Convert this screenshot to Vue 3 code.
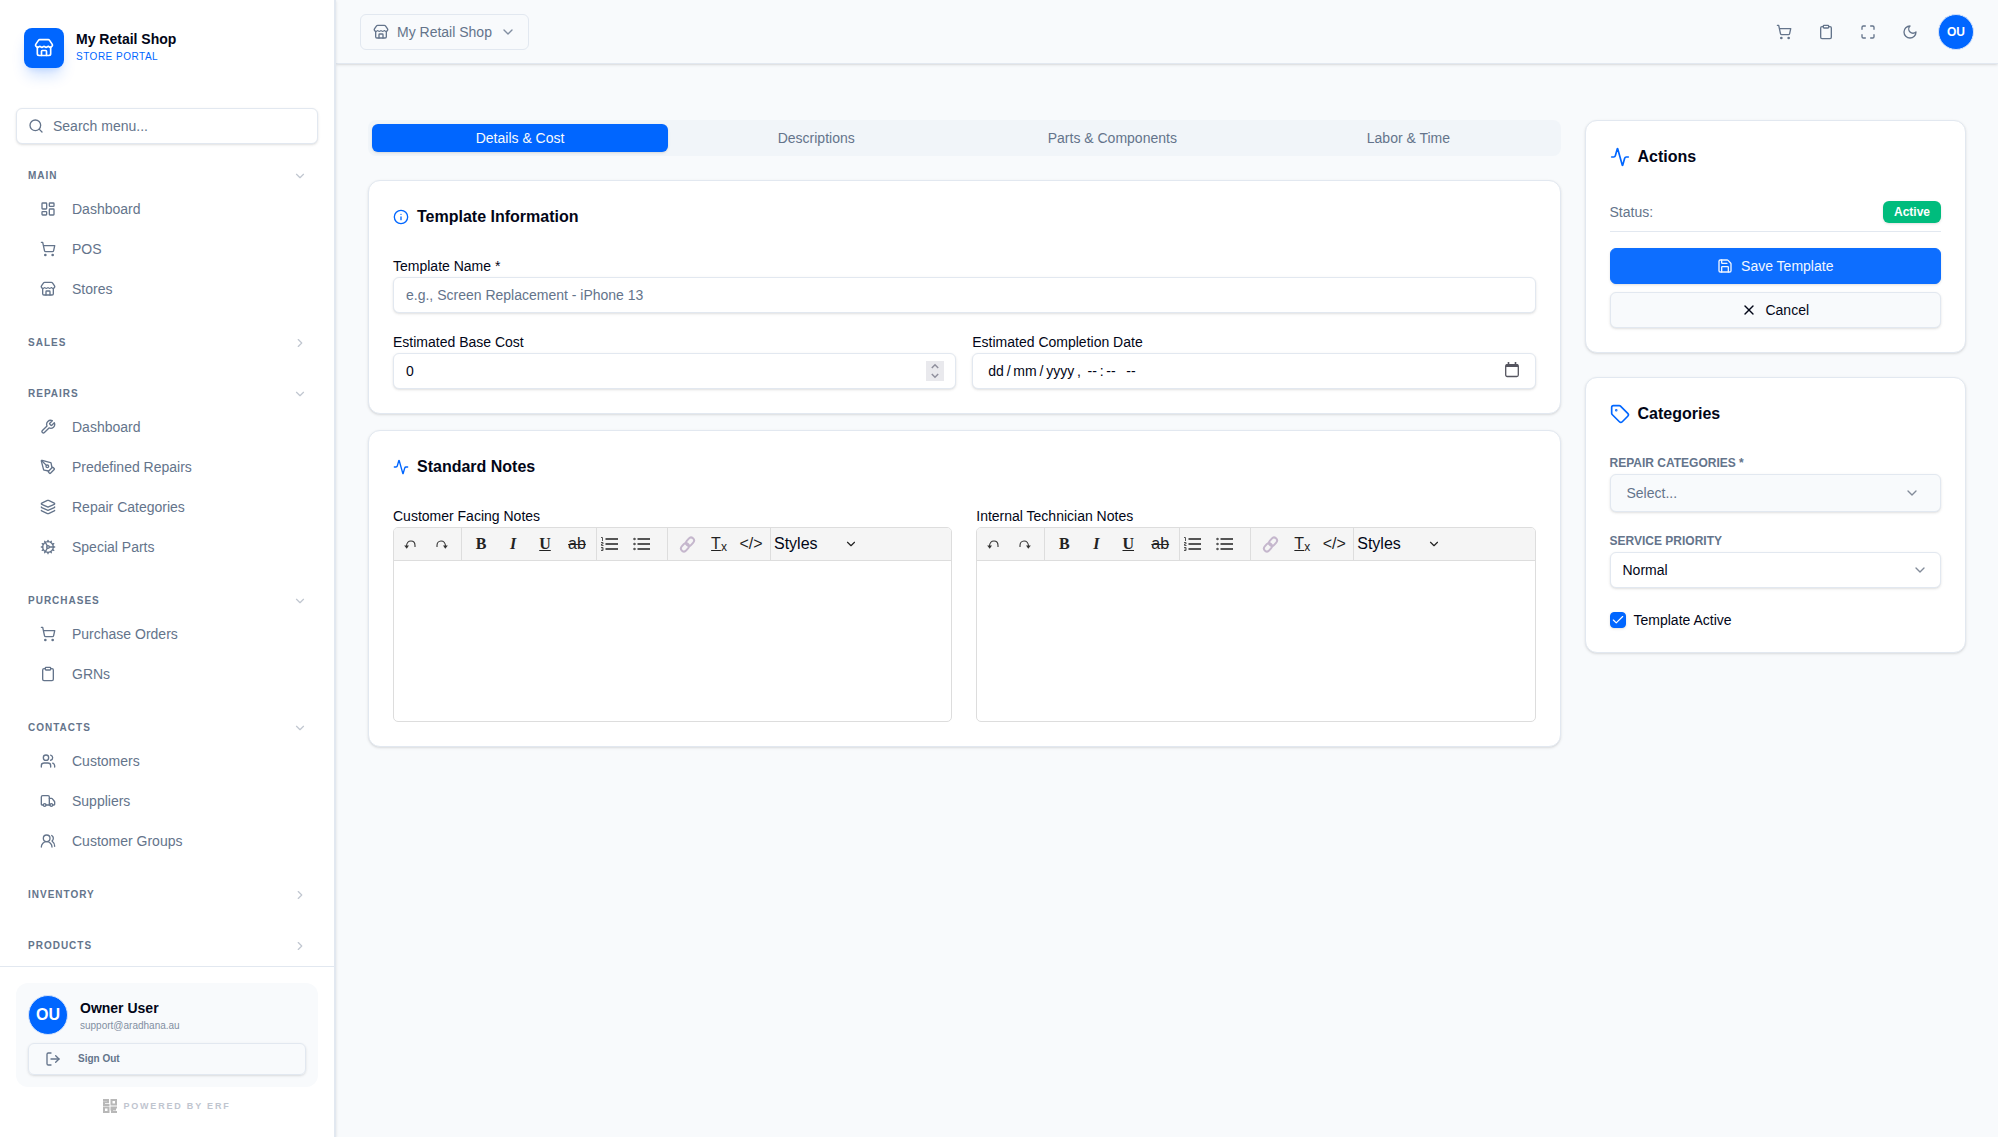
<script setup>
import { ref, h } from 'vue'

const icons = {
  store: '<path d="M15 21v-5a1 1 0 0 0-1-1h-4a1 1 0 0 0-1 1v5"/><path d="M17.774 10.31a1.12 1.12 0 0 0-1.549 0 2.5 2.5 0 0 1-3.451 0 1.12 1.12 0 0 0-1.548 0 2.5 2.5 0 0 1-3.452 0 1.12 1.12 0 0 0-1.549 0 2.5 2.5 0 0 1-3.77-3.248l2.889-4.184A2 2 0 0 1 7 2h10a2 2 0 0 1 1.653.873l2.895 4.192a2.5 2.5 0 0 1-3.774 3.244"/><path d="M4 10.95V19a2 2 0 0 0 2 2h12a2 2 0 0 0 2-2v-8.05"/>',
  dashboard: '<rect x="3" y="3" width="7" height="9" rx="1"/><rect x="14" y="3" width="7" height="5" rx="1"/><rect x="14" y="12" width="7" height="9" rx="1"/><rect x="3" y="16" width="7" height="5" rx="1"/>',
  cart: '<circle cx="8" cy="21" r="1"/><circle cx="19" cy="21" r="1"/><path d="M2.05 2.05h2l2.66 12.42a2 2 0 0 0 2 1.58h9.78a2 2 0 0 0 1.95-1.57l1.65-7.43H5.12"/>',
  wrench: '<path d="M14.7 6.3a1 1 0 0 0 0 1.4l1.6 1.6a1 1 0 0 0 1.4 0l3.77-3.77a6 6 0 0 1-7.94 7.94l-6.91 6.91a2.12 2.12 0 0 1-3-3l6.91-6.91a6 6 0 0 1 7.94-7.94l-3.76 3.76z"/>',
  pen: '<path d="M15.707 21.293a1 1 0 0 1-1.414 0l-1.586-1.586a1 1 0 0 1 0-1.414l5.586-5.586a1 1 0 0 1 1.414 0l1.586 1.586a1 1 0 0 1 0 1.414z"/><path d="m18 13-1.375-6.874a1 1 0 0 0-.746-.776L3.235 2.028a1 1 0 0 0-1.207 1.207L5.35 15.879a1 1 0 0 0 .776.746L13 18"/><path d="m2.3 2.3 7.286 7.286"/><circle cx="11" cy="11" r="2"/>',
  layers: '<path d="M12.83 2.18a2 2 0 0 0-1.66 0L2.6 6.08a1 1 0 0 0 0 1.83l8.58 3.91a2 2 0 0 0 1.66 0l8.58-3.9a1 1 0 0 0 0-1.83z"/><path d="M2 12a1 1 0 0 0 .58.91l8.6 3.91a2 2 0 0 0 1.65 0l8.58-3.9A1 1 0 0 0 22 12"/><path d="M2 17a1 1 0 0 0 .58.91l8.6 3.91a2 2 0 0 0 1.65 0l8.58-3.9A1 1 0 0 0 22 17"/>',
  cog: '<circle cx="12" cy="12" r="8"/><circle cx="12" cy="12" r="2"/><path d="M12 2v2"/><path d="M12 22v-2"/><path d="m17 20.66-1-1.73"/><path d="M11 10.27 7 3.34"/><path d="m20.66 17-1.73-1"/><path d="m3.34 7 1.73 1"/><path d="M14 12h8"/><path d="M2 12h2"/><path d="m20.66 7-1.73 1"/><path d="m3.34 17 1.73-1"/><path d="m17 3.34-1 1.73"/><path d="m11 13.73-4 6.93"/>',
  clipboard: '<rect x="8" y="2" width="8" height="4" rx="1"/><path d="M16 4h2a2 2 0 0 1 2 2v14a2 2 0 0 1-2 2H6a2 2 0 0 1-2-2V6a2 2 0 0 1 2-2h2"/>',
  users: '<path d="M16 21v-2a4 4 0 0 0-4-4H6a4 4 0 0 0-4 4v2"/><circle cx="9" cy="7" r="4"/><path d="M22 21v-2a4 4 0 0 0-3-3.87"/><path d="M16 3.13a4 4 0 0 1 0 7.75"/>',
  truck: '<path d="M14 18V6a2 2 0 0 0-2-2H4a2 2 0 0 0-2 2v11a1 1 0 0 0 1 1h2"/><path d="M15 18H9"/><path d="M19 18h2a1 1 0 0 0 1-1v-3.65a1 1 0 0 0-.22-.624l-3.48-4.35A1 1 0 0 0 17.52 8H14"/><circle cx="17" cy="18" r="2"/><circle cx="7" cy="18" r="2"/>',
  groups: '<path d="M18 21a8 8 0 0 0-16 0"/><circle cx="10" cy="8" r="5"/><path d="M22 20c0-3.37-2-6.5-4-8a5 5 0 0 0-.45-8.3"/>',
  maximize: '<path d="M8 3H5a2 2 0 0 0-2 2v3"/><path d="M21 8V5a2 2 0 0 0-2-2h-3"/><path d="M3 16v3a2 2 0 0 0 2 2h3"/><path d="M16 21h3a2 2 0 0 0 2-2v-3"/>',
  moon: '<path d="M12 3a6 6 0 0 0 9 9 9 9 0 1 1-9-9Z"/>',
  info: '<circle cx="12" cy="12" r="10"/><path d="M12 16v-4"/><path d="M12 8h.01"/>',
  activity: '<path d="M22 12h-2.48a2 2 0 0 0-1.93 1.46l-2.35 8.36a.25.25 0 0 1-.48 0L9.24 2.18a.25.25 0 0 0-.48 0l-2.35 8.36A2 2 0 0 1 4.49 12H2"/>',
  tag: '<path d="M12.586 2.586A2 2 0 0 0 11.172 2H4a2 2 0 0 0-2 2v7.172a2 2 0 0 0 .586 1.414l8.704 8.704a2.426 2.426 0 0 0 3.42 0l6.58-6.58a2.426 2.426 0 0 0 0-3.42z"/><circle cx="7.5" cy="7.5" r=".5" fill="currentColor"/>',
  save: '<path d="M15.2 3a2 2 0 0 1 1.4.6l3.8 3.8a2 2 0 0 1 .6 1.4V19a2 2 0 0 1-2 2H5a2 2 0 0 1-2-2V5a2 2 0 0 1 2-2z"/><path d="M17 21v-7a1 1 0 0 0-1-1H8a1 1 0 0 0-1 1v7"/><path d="M7 3v4a1 1 0 0 0 1 1h7"/>',
  x: '<path d="M18 6 6 18"/><path d="m6 6 12 12"/>',
  logout: '<path d="m16 17 5-5-5-5"/><path d="M21 12H9"/><path d="M9 21H5a2 2 0 0 1-2-2V5a2 2 0 0 1 2-2h4"/>',
  search: '<circle cx="11" cy="11" r="8"/><path d="m21 21-4.3-4.3"/>',
  down: '<path d="m6 9 6 6 6-6"/>',
  right: '<path d="m9 18 6-6-6-6"/>',
  check: '<path d="M20 6 9 17l-5-5"/>'
}

const Icon = (props) =>
  h('svg', {
    width: props.size || 16,
    height: props.size || 16,
    viewBox: '0 0 24 24',
    fill: 'none',
    stroke: 'currentColor',
    'stroke-width': 2,
    'stroke-linecap': 'round',
    'stroke-linejoin': 'round',
    'aria-hidden': 'true',
    innerHTML: icons[props.name]
  })
Icon.props = ['name', 'size']

const sections = ref([
  { title: 'Main', open: true, items: [['dashboard', 'Dashboard'], ['cart', 'POS'], ['store', 'Stores']] },
  { title: 'Sales', open: false, items: [] },
  { title: 'Repairs', open: true, items: [['wrench', 'Dashboard'], ['pen', 'Predefined Repairs'], ['layers', 'Repair Categories'], ['cog', 'Special Parts']] },
  { title: 'Purchases', open: true, items: [['cart', 'Purchase Orders'], ['clipboard', 'GRNs']] },
  { title: 'Contacts', open: true, items: [['users', 'Customers'], ['truck', 'Suppliers'], ['groups', 'Customer Groups']] },
  { title: 'Inventory', open: false, items: [] },
  { title: 'Products', open: false, items: [] }
])
const tabs = ['Details & Cost', 'Descriptions', 'Parts & Components', 'Labor & Time']
const activeTab = ref(0)
const tools = [['cart', 'Cart'], ['clipboard', 'Clipboard'], ['maximize', 'Full screen'], ['moon', 'Dark mode']]
const editors = [['customer-notes', 'Customer Facing Notes'], ['internal-notes', 'Internal Technician Notes']]
const cost = ref(0)
const active = ref(true)

// Thin spaces keep the date segments apart
const date = ref('dd\u2009/\u2009mm\u2009/\u2009yyyy\u2009, \u2009--\u2009:\u2009-- \u00a0\u2009--')
</script>

<template>
  <div class="shell">
    <aside class="sidebar">
      <div class="brand">
        <span class="logo"><Icon name="store" :size="20" /></span>
        <div class="brand-text">
          <strong>My Retail Shop</strong>
          <span>STORE PORTAL</span>
        </div>
      </div>
      <div class="search">
        <Icon name="search" />
        <input type="search" placeholder="Search menu..." aria-label="Search menu" />
      </div>
      <nav class="nav">
        <section v-for="s in sections" :key="s.title">
          <button class="nav-head" type="button" @click="s.open = !s.open">
            <span>{{ s.title }}</span>
            <Icon :name="s.open ? 'down' : 'right'" :size="14" />
          </button>
          <ul v-if="s.open">
            <li v-for="[icon, label] in s.items" :key="label">
              <a href="#"><Icon :name="icon" />{{ label }}</a>
            </li>
          </ul>
        </section>
      </nav>
      <div class="foot">
        <div class="user">
          <div class="user-row">
            <span class="avatar large">OU</span>
            <div class="user-text">
              <strong>Owner User</strong>
              <span>support@aradhana.au</span>
            </div>
          </div>
          <button class="signout" type="button"><Icon name="logout" />Sign Out</button>
        </div>
        <div class="powered">
          <svg width="14" height="14" viewBox="0 0 14 14" fill="none" stroke="#b8b8b8" stroke-width="2" aria-hidden="true">
            <path d="M0 1h5v2.300H1V6h5.500M8.500 1H13v4.500H8.500zM1 8.500h4.500V13H1zM14 8.500H8.500v2H13M8 13h6M9 8v5" />
          </svg>
          <span>POWERED BY ERF</span>
        </div>
      </div>
    </aside>

    <div class="page">
      <header class="topbar">
        <button class="switcher" type="button">
          <Icon name="store" /><span>My Retail Shop</span><Icon class="chev" name="down" />
        </button>
        <div class="tools">
          <button v-for="[icon, label] in tools" :key="icon" class="tool" type="button" :aria-label="label">
            <Icon :name="icon" />
          </button>
          <button class="avatar" type="button" aria-label="Account">OU</button>
        </div>
      </header>

      <main class="content">
        <div class="left">
          <div class="tabs" role="tablist">
            <button v-for="(t, i) in tabs" :key="t" type="button" role="tab" :aria-selected="i === activeTab" :class="{ on: i === activeTab }" @click="activeTab = i">{{ t }}</button>
          </div>

          <section class="card">
            <h2><Icon name="info" />Template Information</h2>
            <div class="fields">
              <div class="field wide">
                <label for="name">Template Name *</label>
                <input id="name" class="control" type="text" placeholder="e.g., Screen Replacement - iPhone 13" />
              </div>
              <div class="field">
                <label for="cost">Estimated Base Cost</label>
                <div class="wrap">
                  <input id="cost" v-model="cost" class="control" type="number" />
                  <svg class="spin" width="18" height="20" viewBox="0 0 18 20" fill="none" stroke="#8f8f9d" stroke-width="1.500" aria-hidden="true">
                    <path d="M5.800 7 9 3.800 12.200 7M5.800 13 9 16.200 12.200 13" />
                  </svg>
                </div>
              </div>
              <div class="field">
                <label for="date">Estimated Completion Date</label>
                <div class="wrap">
                  <input id="date" v-model="date" class="control date" type="text" />
                  <svg class="calendar" width="14" height="16" viewBox="0 0 14 16" aria-hidden="true">
                    <path d="M.7 5V3.500A1.500 1.500 0 0 1 2 2h10a1.500 1.500 0 0 1 1.300 1.500V5z" fill="#55555f" />
                    <path d="M3.500 0v3M10.500 0v3" stroke="#55555f" stroke-width="1.600" />
                    <rect x=".7" y="2.700" width="12.600" height="11.800" rx="1.500" fill="none" stroke="#55555f" stroke-width="1.300" />
                  </svg>
                </div>
              </div>
            </div>
          </section>

          <section class="card notes">
            <h2><Icon name="activity" />Standard Notes</h2>
            <div class="editors">
              <div v-for="[id, label] in editors" :key="id" class="field">
                <label :for="id">{{ label }}</label>
                <div class="editor">
                  <div class="bar" role="toolbar">
                    <button type="button" title="Undo">
                      <svg width="12" height="10" viewBox="0 0 12 10" fill="none" stroke="#333" aria-hidden="true">
                        <path d="M2.500 7.500C2.500 3.500 4.500 2 7 2s4 2 4 4.500V8" stroke-width="1.100" />
                        <path d="M.2 6.500h4.800L2.700 9.800z" fill="#333" stroke="none" />
                      </svg>
                    </button>
                    <button type="button" title="Redo">
                      <svg width="12" height="10" viewBox="0 0 12 10" fill="none" stroke="#333" aria-hidden="true">
                        <path d="M9.500 7.500C9.500 3.500 7.500 2 5 2S1 4 1 6.500V8" stroke-width="1.100" />
                        <path d="M7 6.500h4.800L9.300 9.800z" fill="#333" stroke="none" />
                      </svg>
                    </button>
                    <i class="sep"></i>
                    <button type="button" title="Bold" class="serif">B</button>
                    <button type="button" title="Italic" class="serif"><em>I</em></button>
                    <button type="button" title="Underline" class="serif"><u>U</u></button>
                    <button type="button" title="Strike through"><s>ab</s></button>
                    <i class="sep"></i>
                    <button type="button" title="Numbered list" class="list">
                      <svg width="17" height="14" viewBox="0 0 17 14" fill="none" stroke="#555" aria-hidden="true">
                        <path d="M4.500 2H17M4.500 7H17M4.500 12H17" stroke-width="2" />
                        <path d="M0 .5h1.500V4M0 5.500h2v1.500H.5v1.500H2.500M0 10.500h2v3H0M.5 12H2" />
                      </svg>
                    </button>
                    <button type="button" title="Bullet list" class="list">
                      <svg width="17" height="14" viewBox="0 0 17 14" fill="none" stroke="#555" aria-hidden="true">
                        <path d="M4.500 2H17M4.500 7H17M4.500 12H17" stroke-width="2" />
                        <path d="M1.500 2h.01M1.500 7h.01M1.500 12h.01" stroke-width="2.600" stroke-linecap="round" />
                      </svg>
                    </button>
                    <i class="sep"></i>
                    <button type="button" title="Link">
                      <svg width="17" height="17" viewBox="0 0 17 17" fill="none" stroke="#c5b7cd" stroke-width="2" aria-hidden="true">
                        <rect x="6.500" y="2.700" width="9" height="6" rx="3" transform="rotate(-48 11 5.700)" />
                        <rect x="1.500" y="8.300" width="9" height="6" rx="3" transform="rotate(-48 6 11.300)" />
                      </svg>
                    </button>
                    <button type="button" title="Clear formatting" class="clear"><u>T</u><sub>x</sub></button>
                    <button type="button" title="HTML mode">&lt;/&gt;</button>
                    <i class="sep"></i>
                    <div class="styles">
                      <select aria-label="Styles"><option>Styles</option></select>
                      <Icon name="down" :size="14" />
                    </div>
                  </div>
                  <textarea :id="id"></textarea>
                </div>
              </div>
            </div>
          </section>
        </div>

        <div class="right">
          <section class="card">
            <h2><Icon name="activity" :size="20" />Actions</h2>
            <div class="status"><span>Status:</span><b>Active</b></div>
            <div class="buttons">
              <button class="btn primary" type="button"><Icon name="save" />Save Template</button>
              <button class="btn" type="button"><Icon name="x" />Cancel</button>
            </div>
          </section>

          <section class="card">
            <h2><Icon name="tag" :size="20" />Categories</h2>
            <div class="field caps">
              <label for="cats">REPAIR CATEGORIES *</label>
              <div class="pick soft">
                <select id="cats"><option>Select...</option></select>
                <Icon name="down" />
              </div>
            </div>
            <div class="field caps">
              <label for="prio">SERVICE PRIORITY</label>
              <div class="pick">
                <select id="prio"><option>Normal</option></select>
                <Icon name="down" />
              </div>
            </div>
            <label class="tick">
              <input v-model="active" type="checkbox" />
              <Icon v-if="active" name="check" :size="14" />
              <span>Template Active</span>
            </label>
          </section>
        </div>
      </main>
    </div>
  </div>
</template>

<style>
body { margin: 0; background: #f8fafc; }
</style>

<style scoped>
* { box-sizing: border-box; }
.shell {
  --ink: #020617;
  --muted: #64748b;
  --line: #e2e8f0;
  --blue: #0066ff;
  --lift: 0 1px 3px rgba(0, 0, 0, .1), 0 1px 2px -1px rgba(0, 0, 0, .1);
  display: flex;
  min-height: 100vh;
  font: 14px/20px "Liberation Sans", Arial, sans-serif;
  color: var(--ink);
}
svg { display: block; flex: none; }
button, input, select, textarea { font: inherit; color: inherit; margin: 0; }
button { border: 0; background: none; padding: 0; cursor: pointer; }
a { color: inherit; text-decoration: none; }
h2 { margin: 0; }

.sidebar {
  position: sticky;
  top: 0;
  flex: none;
  display: flex;
  flex-direction: column;
  width: 336px;
  height: 100vh;
  background: #fff;
  border-right: 2px solid var(--line);
  box-shadow: var(--lift);
}
.brand { display: flex; align-items: center; gap: 12px; height: 96px; padding: 0 24px; }
.logo {
  display: grid;
  place-items: center;
  width: 40px;
  height: 40px;
  border-radius: 8px;
  background: var(--blue);
  color: #fff;
  box-shadow: 0 10px 15px -3px rgba(0, 102, 255, .2), 0 4px 6px -4px rgba(0, 102, 255, .2);
}
.brand-text { display: flex; flex-direction: column; }
.brand-text strong { line-height: 18px; }
.brand-text span { color: var(--blue); font-size: 10px; line-height: 18px; letter-spacing: .05em; }
.search { position: relative; flex: none; margin: 12px 16px 16px; color: var(--muted); }
.search svg { position: absolute; left: 12px; top: 10px; }
.search input {
  display: block;
  width: 100%;
  height: 36px;
  padding: 0 12px 0 36px;
  border: 1px solid var(--line);
  border-radius: 6px;
  background: #fff;
  box-shadow: var(--lift);
  appearance: none;
}
::placeholder { color: var(--muted); opacity: 1; }
.nav {
  flex: 1;
  min-height: 0;
  display: flex;
  flex-direction: column;
  gap: 20px;
  padding: 0 16px;
  overflow-y: auto;
  scrollbar-width: none;
  color: var(--muted);
}
.nav-head {
  display: flex;
  align-items: center;
  justify-content: space-between;
  width: 100%;
  height: 31px;
  padding: 0 11px 0 12px;
  font-size: 10px;
  font-weight: 700;
  letter-spacing: .1em;
  text-transform: uppercase;
}
.nav-head svg { opacity: .4; }
.nav ul { display: flex; flex-direction: column; gap: 4px; margin: 0; padding: 0; list-style: none; }
.nav a { display: flex; align-items: center; gap: 16px; height: 36px; padding: 0 24px; }
.foot { flex: none; padding: 16px 16px 24px; border-top: 1px solid var(--line); }
.user { padding: 12px; border-radius: 12px; background: #f8fafc; }
.user-row { display: flex; align-items: center; gap: 12px; margin-bottom: 8px; }
.user-text { display: flex; flex-direction: column; }
.user-text span { color: var(--muted); font-size: 10px; line-height: 15px; opacity: .8; }
.avatar {
  display: grid;
  place-items: center;
  width: 36px;
  height: 36px;
  border: 1px solid #d6e4fb;
  border-radius: 50%;
  background: var(--blue);
  color: #fff;
  font-size: 12px;
  font-weight: 700;
}
.avatar.large { width: 40px; height: 40px; font-size: 16px; }
.signout {
  display: flex;
  align-items: center;
  gap: 17px;
  width: 100%;
  height: 32px;
  padding: 0 16px;
  border: 1px solid var(--line);
  border-radius: 6px;
  box-shadow: var(--lift);
  color: var(--muted);
  font-size: 10px;
  font-weight: 700;
}
.powered {
  display: flex;
  align-items: center;
  justify-content: center;
  gap: 6px;
  height: 14px;
  margin-top: 12px;
  color: #bfc5cf;
  font-size: 9px;
  font-weight: 700;
  letter-spacing: .2em;
}

.page { flex: 1; min-width: 0; }
.topbar {
  display: flex;
  align-items: center;
  justify-content: space-between;
  height: 64px;
  padding: 0 24px;
  border-bottom: 1px solid var(--line);
  box-shadow: var(--lift);
}
.switcher {
  display: flex;
  align-items: center;
  gap: 8px;
  height: 36px;
  padding: 0 12px;
  border: 1px solid var(--line);
  border-radius: 6px;
  color: var(--muted);
}
.switcher .chev { opacity: .8; }
.tools { display: flex; align-items: center; gap: 6px; color: var(--muted); }
.tool { display: grid; place-items: center; width: 36px; height: 36px; }
.tools .avatar { margin-left: 4px; }

.content { display: grid; grid-template-columns: repeat(4, 1fr); align-items: start; gap: 24px; padding: 56px 32px 32px; }
.left { grid-column: span 3; }
.right { display: flex; flex-direction: column; gap: 24px; }
.tabs { display: flex; padding: 4px; border-radius: 8px; background: #f1f5f9; }
.tabs button { flex: 1; height: 28px; border-radius: 6px; color: var(--muted); }
.tabs .on { background: var(--blue); color: #f8fafc; box-shadow: var(--lift); }
.card {
  padding: 24px;
  border: 1px solid var(--line);
  border-radius: 12px;
  background: #fff;
  box-shadow: var(--lift);
}
.left .card { margin-top: 24px; }
.left .notes { margin-top: 16px; }
.card h2 { display: flex; align-items: center; gap: 8px; margin-bottom: 28px; font-size: 16px; line-height: 24px; }
.card h2 svg { color: var(--blue); }
.fields { display: grid; grid-template-columns: 1fr 1fr; gap: 20px 16px; }
.wide { grid-column: 1 / -1; }
.editors { display: grid; grid-template-columns: 1fr 1fr; gap: 24px; }
.field label { display: block; line-height: 18px; padding-bottom: 2px; }
.control, .pick select {
  display: block;
  width: 100%;
  height: 36px;
  padding: 0 12px;
  border: 1px solid var(--line);
  border-radius: 6px;
  background: #fff;
  box-shadow: var(--lift);
}
.wrap { position: relative; }
.control[type="number"] { appearance: textfield; }
.control.date { padding: 0 40px 0 15px; }
.spin { position: absolute; right: 12px; top: 8px; background: #e9e9ed; pointer-events: none; }
.calendar { position: absolute; right: 17px; top: 9px; pointer-events: none; }
.editor { overflow: hidden; border: 1px solid #ddd; border-radius: 5px; background: #fff; }
.bar { display: flex; align-items: center; height: 33px; border-bottom: 1px solid #ddd; background: #f5f5f5; font-size: 16px; color: #222; }
.bar button { display: flex; align-items: center; justify-content: center; width: 32px; height: 32px; }
.bar .serif { font-family: "Liberation Serif", "Times New Roman", serif; font-weight: 700; }
.bar .list { justify-content: flex-start; padding-left: 1px; }
.clear sub { font-size: 12px; line-height: 12px; align-self: center; margin-top: 6px; }
.sep { align-self: stretch; width: 1px; margin: 0 3px; background: #ddd; }
.styles { position: relative; }
.styles select { width: 90px; height: 32px; padding: 0; border: 0; background: none; appearance: none; color: var(--ink); }
.styles svg { position: absolute; right: 6px; top: 9px; pointer-events: none; }
.editor textarea { display: block; width: 100%; height: 160px; padding: 8px; border: 0; background: none; resize: none; outline: 0; }

.right h2 { margin-bottom: 32px; }
.status { display: flex; align-items: center; justify-content: space-between; padding-bottom: 8px; border-bottom: 1px solid var(--line); color: var(--muted); }
.status b { padding: 0 11px; border-radius: 6px; background: #00bc7d; box-shadow: var(--lift); color: #fff; font-size: 12px; line-height: 22px; }
.buttons { display: flex; flex-direction: column; gap: 8px; margin-top: 16px; }
.btn {
  display: flex;
  align-items: center;
  justify-content: center;
  gap: 8px;
  height: 36px;
  border: 1px solid var(--line);
  border-radius: 6px;
  background: #f8fafc;
  box-shadow: var(--lift);
}
.btn.primary { border-color: #0d6eff; background: #0d6eff; color: #f1f6ff; }
.right .card + .card h2 { margin-bottom: 28px; }
.caps + .caps { margin-top: 20px; }
.caps label { color: var(--muted); font-size: 12px; font-weight: 700; }
.pick { position: relative; }
.pick select { appearance: none; }
.pick svg { position: absolute; right: 13px; top: 10px; pointer-events: none; color: #828b99; }
.pick.soft select { height: 38px; padding: 0 16px; background: #f8fafc; color: var(--muted); }
.pick.soft svg { right: 21px; top: 11px; }
.tick { position: relative; display: flex; align-items: center; gap: 8px; height: 16px; margin-top: 24px; }
.tick input { width: 16px; height: 16px; border-radius: 4px; background: #fff; border: 1px solid var(--blue); appearance: none; box-shadow: var(--lift); }
.tick input:checked { background: var(--blue); }
.tick svg { position: absolute; left: 1px; top: 1px; color: #fff; pointer-events: none; }
</style>
